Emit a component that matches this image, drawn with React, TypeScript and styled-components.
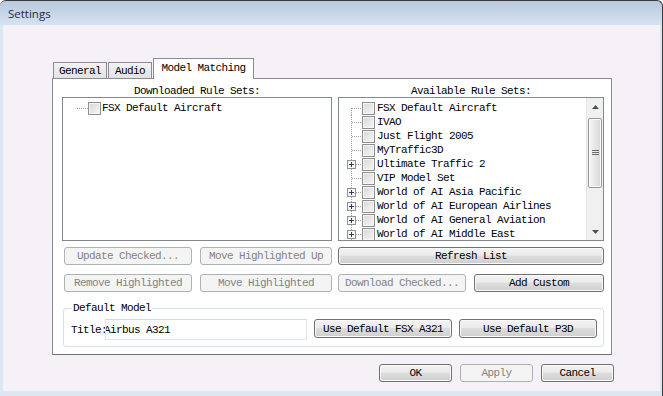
import React from 'react';
import styled, { createGlobalStyle } from 'styled-components';

const MONO = `"Liberation Mono", "DejaVu Sans Mono", monospace`;

const GlobalStyle = createGlobalStyle`
  html, body {
    margin: 0;
    padding: 0;
    overflow: hidden;
    background: #fff;
  }
  * {
    box-sizing: border-box;
  }
`;

const Window = styled.div`
  width: 663px;
  height: 396px;
  display: flex;
  flex-direction: column;
  background: linear-gradient(#b9c9db 0px, #d5e2f1 24px, #dce7f4 25px);
  border-top: 1px solid #3b3b3b;
  border-right: 1px solid #3b3b3b;
  border-radius: 6px 6px 0 0;
  padding: 0 2px 5px 3px;
  font-family: ${MONO};
  font-size: 11px;
  letter-spacing: -0.6px;
  color: #000;
`;

const TitleBar = styled.div`
  height: 24px;
  display: flex;
  align-items: center;
  padding-left: 5px;
  font-family: 'Open Sans', 'Noto Sans', sans-serif;
  font-size: 11.5px;
  letter-spacing: 0;
  color: #1c2a3d;
`;

const Client = styled.div`
  flex: 1;
  background: #f6f1f6;
  display: flex;
  flex-direction: column;
  align-items: flex-start;
  padding: 33px 0 0 49px;
`;

const TabStrip = styled.div`
  display: flex;
  align-items: flex-end;
  height: 21px;
  margin-left: 1px;
  margin-bottom: -1px;
  position: relative;
  z-index: 1;
`;

const Tab = styled.div<{ $w: number; $active?: boolean }>`
  width: ${(p) => p.$w}px;
  height: ${(p) => (p.$active ? 21 : 17)}px;
  display: flex;
  align-items: center;
  justify-content: center;
  border: 1px solid #898c95;
  border-bottom: ${(p) => (p.$active ? 'none' : '1px solid #898c95')};
  margin-right: ${(p) => (p.$active ? 0 : 1)}px;
  padding-bottom: ${(p) => (p.$active ? 3 : 0)}px;
  background: ${(p) =>
    p.$active ? '#fff' : 'linear-gradient(#f3f3f3, #e2e2e2)'};
  white-space: pre;
`;

const Panel = styled.div`
  width: 560px;
  height: 277px;
  border: 1px solid #898c95;
  border-bottom-color: #6b6e74;
  background: #fff;
  padding: 6px 7px 0 9px;
`;

const Columns = styled.div`
  display: grid;
  grid-template-columns: 270px 266px;
  column-gap: 6px;
`;

const Column = styled.div`
  display: flex;
  flex-direction: column;
`;

const ColumnLabel = styled.div`
  height: 12px;
  line-height: 12px;
  text-align: center;
  white-space: pre;
`;

const ListBox = styled.div`
  height: 144px;
  border: 1px solid #828790;
  display: flex;
  overflow: hidden;
`;

const TreeBody = styled.div`
  flex: 1;
  padding-top: 3px;
`;

const TreeRow = styled.div`
  height: 14px;
  display: flex;
  align-items: center;
  white-space: pre;
`;

const Check = styled.span`
  width: 13px;
  height: 13px;
  flex: none;
  border: 1px solid #8f8f8f;
  box-shadow: inset 0 0 0 1px #f6f6f6;
  background: linear-gradient(135deg, #d6d6d6, #f8f8f8);
`;

const ItemText = styled.span<{ $gap?: number }>`
  margin-left: ${(p) => p.$gap ?? 2}px;
  line-height: 14px;
`;

const ScrollBar = styled.div`
  width: 17px;
  flex: none;
  display: flex;
  flex-direction: column;
  background: #f0f0f0;
  border-left: 1px solid #e6e6e6;
`;

const ScrollArrow = styled.div`
  height: 17px;
  display: flex;
  align-items: center;
  justify-content: center;
`;

const ScrollTrack = styled.div`
  flex: 1;
  padding: 3px 1px 0 1px;
`;

const Thumb = styled.div`
  height: 70px;
  border: 1px solid #979797;
  border-radius: 2px;
  background: linear-gradient(90deg, #f5f5f5, #e6e6e6 50%, #d8d8d8);
  box-shadow: inset 0 0 0 1px #fbfbfb;
  display: flex;
  align-items: center;
  justify-content: center;
`;

const ButtonRow = styled.div<{ $cols: string; $inset?: number; $top: number }>`
  display: grid;
  grid-template-columns: ${(p) => p.$cols};
  column-gap: 8px;
  margin-top: ${(p) => p.$top}px;
  padding-left: ${(p) => p.$inset ?? 0}px;
`;

const Button = styled.div<{ $disabled?: boolean; $w?: number; $h?: number }>`
  height: ${(p) => p.$h ?? 18}px;
  width: ${(p) => (p.$w ? `${p.$w}px` : 'auto')};
  display: flex;
  align-items: center;
  justify-content: center;
  white-space: pre;
  border-radius: 3px;
  border: 1px solid ${(p) => (p.$disabled ? '#adb2b5' : '#707070')};
  color: ${(p) => (p.$disabled ? '#838383' : '#000')};
  background: ${(p) =>
    p.$disabled
      ? '#f4f4f4'
      : 'linear-gradient(#f3f3f3 0%, #ebebeb 45%, #dddddd 50%, #cfcfcf 100%)'};
  box-shadow: ${(p) => (p.$disabled ? 'none' : 'inset 0 0 0 1px #fbfbfb')};
`;

const GroupBox = styled.fieldset`
  width: 541px;
  margin: 10px 0 0 1px;
  padding: 5px 6px 6px 7px;
  border: 1px solid #d5dfe5;
  border-radius: 3px;
`;

const GroupLegend = styled.legend`
  padding: 0 1px;
  margin-left: 1px;
  line-height: 12px;
  font-family: ${MONO};
  font-size: 11px;
  letter-spacing: -0.6px;
`;

const GroupRow = styled.div`
  display: flex;
  align-items: center;
  white-space: pre;
`;

const FieldLabel = styled.span`
  width: 34px;
`;

const TextField = styled.input`
  width: 202px;
  height: 21px;
  margin-right: 7px;
  border: 1px solid #e0e5ea;
  border-top-color: #d3d8de;
  padding: 0;
  text-indent: -2px;
  font-family: ${MONO};
  font-size: 11px;
  letter-spacing: -0.6px;
  color: #000;
  background: #fff;
  outline: none;
`;

const GroupButtons = styled.div`
  display: flex;
  gap: 7px;
  margin-top: -2px;
`;

const Footer = styled.div`
  width: 562px;
  margin-top: 9px;
  display: flex;
  justify-content: flex-end;
  gap: 8px;
`;

const TreeLines: React.FC<{ width: number; from: number; vertical?: boolean; first?: boolean; plus?: boolean }> = ({
  width,
  from,
  vertical,
  first,
  plus,
}) => (
  <svg width={width} height={14} style={{ flex: 'none' }}>
    {vertical && (
      <line x1={12.5} y1={first ? 7 : 0} x2={12.5} y2={14} stroke="#a0a0a0" strokeDasharray="1 1" />
    )}
    <line x1={from} y1={7.5} x2={width} y2={7.5} stroke="#a0a0a0" strokeDasharray="1 1" />
    {plus && (
      <g>
        <rect x={8.5} y={3.5} width={8} height={8} fill="#f7f7f7" stroke="#919191" />
        <line x1={10} y1={7.5} x2={15} y2={7.5} stroke="#24407a" />
        <line x1={12.5} y1={5} x2={12.5} y2={10} stroke="#24407a" />
      </g>
    )}
  </svg>
);

const available = [
  { name: 'FSX Default Aircraft', plus: false },
  { name: 'IVAO', plus: false },
  { name: 'Just Flight 2005', plus: false },
  { name: 'MyTraffic3D', plus: false },
  { name: 'Ultimate Traffic 2', plus: true },
  { name: 'VIP Model Set', plus: false },
  { name: 'World of AI Asia Pacific', plus: true },
  { name: 'World of AI European Airlines', plus: true },
  { name: 'World of AI General Aviation', plus: true },
  { name: 'World of AI Middle East', plus: true },
];

const App: React.FC = () => (
  <>
    <GlobalStyle />
    <Window>
      <TitleBar>Settings</TitleBar>
      <Client>
        <TabStrip>
          <Tab $w={54}>General</Tab>
          <Tab $w={44}>Audio</Tab>
          <Tab $w={101} $active>
            Model Matching
          </Tab>
        </TabStrip>
        <Panel>
          <Columns>
            <Column>
              <ColumnLabel>Downloaded Rule Sets:</ColumnLabel>
              <ListBox>
                <TreeBody>
                  <TreeRow>
                    <TreeLines width={25} from={14} />
                    <Check />
                    <ItemText $gap={1}>FSX Default Aircraft</ItemText>
                  </TreeRow>
                </TreeBody>
              </ListBox>
              <ButtonRow $cols="128px 132px" $inset={2} $top={6}>
                <Button $disabled>Update Checked...</Button>
                <Button $disabled>Move Highlighted Up</Button>
              </ButtonRow>
              <ButtonRow $cols="128px 132px" $inset={2} $top={9}>
                <Button $disabled>Remove Highlighted</Button>
                <Button $disabled>Move Highlighted</Button>
              </ButtonRow>
            </Column>
            <Column>
              <ColumnLabel>Available Rule Sets:</ColumnLabel>
              <ListBox>
                <TreeBody>
                  {available.map((item, i) => (
                    <TreeRow key={item.name}>
                      <TreeLines width={23} from={item.plus ? 17 : 13} vertical first={i === 0} plus={item.plus} />
                      <Check />
                      <ItemText>{item.name}</ItemText>
                    </TreeRow>
                  ))}
                </TreeBody>
                <ScrollBar>
                  <ScrollArrow>
                    <svg width="7" height="4">
                      <path d="M0 4 L3.5 0 L7 4 Z" fill="#505050" />
                    </svg>
                  </ScrollArrow>
                  <ScrollTrack>
                    <Thumb>
                      <svg width="7" height="6">
                        <path d="M0 0.5H7M0 2.5H7M0 4.5H7" stroke="#6a6a6a" />
                      </svg>
                    </Thumb>
                  </ScrollTrack>
                  <ScrollArrow>
                    <svg width="7" height="4">
                      <path d="M0 0 L3.5 4 L7 0 Z" fill="#505050" />
                    </svg>
                  </ScrollArrow>
                </ScrollBar>
              </ListBox>
              <ButtonRow $cols="1fr" $top={6}>
                <Button>Refresh List</Button>
              </ButtonRow>
              <ButtonRow $cols="128px 1fr" $top={9}>
                <Button $disabled>Download Checked...</Button>
                <Button>Add Custom</Button>
              </ButtonRow>
            </Column>
          </Columns>
          <GroupBox>
            <GroupLegend>Default Model</GroupLegend>
            <GroupRow>
              <FieldLabel>Title:</FieldLabel>
              <TextField defaultValue="Airbus A321" readOnly />
              <GroupButtons>
                <Button $w={138} $h={19}>
                  Use Default FSX A321
                </Button>
                <Button $w={138} $h={19}>
                  Use Default P3D
                </Button>
              </GroupButtons>
            </GroupRow>
          </GroupBox>
        </Panel>
        <Footer>
          <Button $w={73}>OK</Button>
          <Button $w={73} $disabled>
            Apply
          </Button>
          <Button $w={73}>Cancel</Button>
        </Footer>
      </Client>
    </Window>
  </>
);

export default App;
